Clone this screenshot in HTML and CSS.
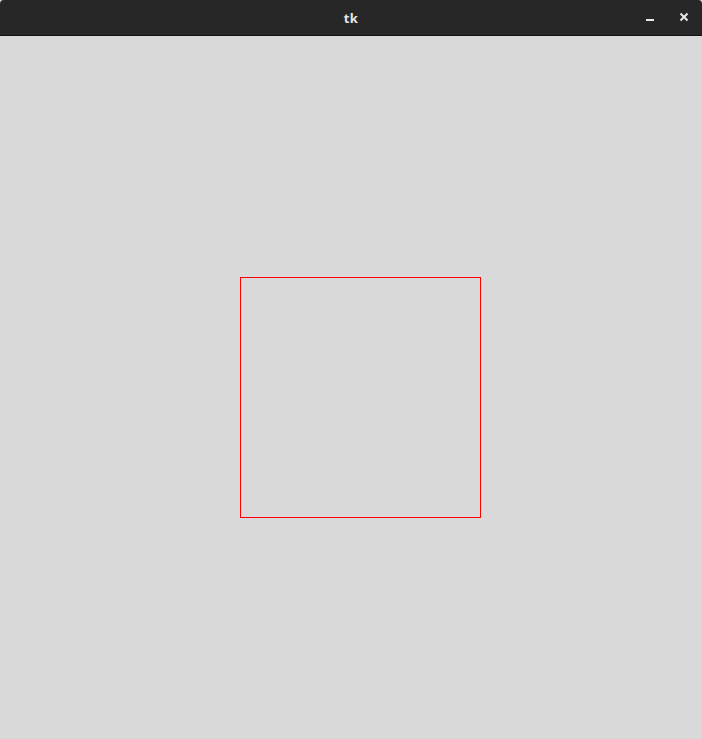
FILE: index.html
```html
<!DOCTYPE html>
<html>
<head>
<meta charset="utf-8">
<link rel="stylesheet" href="styles.css">
</head>
<body>
<div class="window">
  <div class="titlebar">
    <span class="title">tk</span>
    <div class="controls">
      <span class="btn min"><svg width="10" height="10" viewBox="0 0 10 10"><rect x="1" y="7" width="8" height="2" fill="#e8e8e8"/></svg></span>
      <span class="btn close"><svg width="10" height="10" viewBox="0 0 10 10"><path d="M1.5 1.5 L8.5 8.5 M8.5 1.5 L1.5 8.5" stroke="#e8e8e8" stroke-width="2"/></svg></span>
    </div>
  </div>
  <div class="canvas">
    <div class="square"></div>
  </div>
</div>
</body>
</html>
```
FILE: styles.css
```css
html, body {
  margin: 0;
  padding: 0;
  width: 702px;
  height: 739px;
  overflow: hidden;
  background: #d9d9d9;
}
.window {
  display: flex;
  flex-direction: column;
  width: 702px;
  height: 739px;
}
.titlebar {
  position: relative;
  height: 35px;
  flex: none;
  background: #272727;
  border-bottom: 1px solid #131313;
  border-radius: 4px 4px 0 0;
  display: flex;
  align-items: center;
  justify-content: center;
}
.title {
  font-family: "Open Sans", "DejaVu Sans", sans-serif;
  font-weight: 700;
  font-size: 13px;
  color: #e6e6e6;
  letter-spacing: 0.5px;
  margin-top: 1px;
}
.controls {
  position: absolute;
  right: 13px;
  top: 12px;
  display: flex;
  gap: 24px;
}
.btn {
  display: block;
  width: 10px;
  height: 10px;
}
.btn svg { display: block; }
.canvas {
  flex: 1;
  background: #d9d9d9;
  padding-top: 241px;
  padding-left: 240px;
}
.square {
  width: 239px;
  height: 239px;
  border: 1px solid #ff0000;
}
```
